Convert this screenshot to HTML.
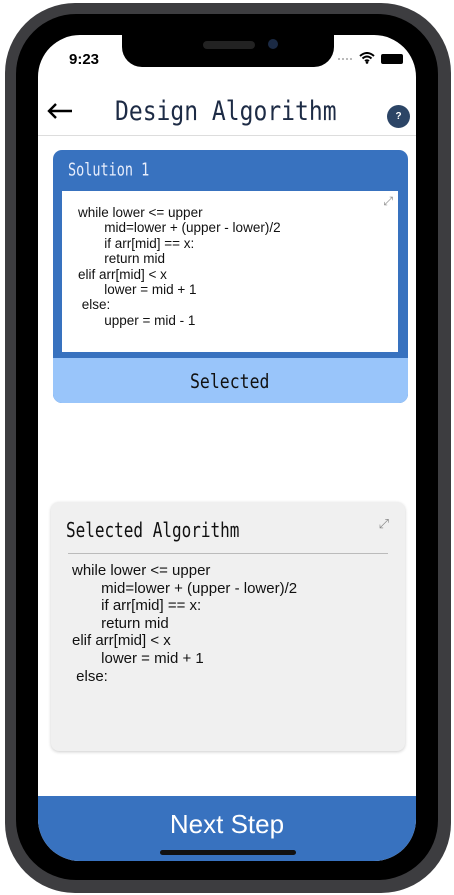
<!DOCTYPE html><html><head><style>
*{margin:0;padding:0;box-sizing:border-box}
body{width:454px;height:895px;background:#fff;position:relative;overflow:hidden;font-family:"Liberation Sans",sans-serif}
.frame{position:absolute;left:5px;top:3px;width:446px;height:890px;border-radius:70px;background:#3d3d40}
.bezel{position:absolute;left:16px;top:14px;width:422px;height:866px;border-radius:60px;background:#000}
.screen{position:absolute;left:38px;top:35px;width:378px;height:826px;border-radius:42px;background:#fff;overflow:hidden}
.notch{position:absolute;left:122px;top:35px;width:212px;height:32px;background:#000;border-radius:0 0 20px 20px}
.mono{font-family:"DejaVu Sans Mono","Liberation Mono",monospace;transform-origin:left top}
.code{font-size:13.5px;line-height:15.4px;color:#111;white-space:pre}
</style></head><body>
<div class="frame"></div><div class="bezel"></div>
<div class="screen">
 <div style="position:absolute;left:31px;top:16px;font-size:15px;font-weight:bold">9:23</div>
 <div style="position:absolute;left:300px;top:23px;width:14px;height:2px;border-top:2px dotted #bbb"></div>
 <svg style="position:absolute;left:321px;top:17px" width="16" height="12" viewBox="0 0 16 12"><path d="M1 4Q8-2 15 4M3.5 6.5Q8 2.5 12.5 6.5M6 9Q8 7.5 10 9" stroke="#000" stroke-width="2" fill="none"/><circle cx="8" cy="10.5" r="1.3"/></svg>
 <div style="position:absolute;left:343px;top:19px;width:22px;height:10px;background:#000;border-radius:2px"></div>
 <svg style="position:absolute;left:8px;top:68px" width="28" height="16"><path d="M26 8H3M10 1L3 8l7 7" stroke="#000" stroke-width="2.4" fill="none"/></svg>
 <div class="mono" style="position:absolute;left:77px;top:62px;font-size:23px;color:#1d2b45;transform:scaleY(1.15)">Design Algorithm</div>
 <div style="position:absolute;left:349px;top:70px;width:23px;height:23px;border-radius:50%;background:#2c4566;color:#fff;font-size:10px;text-align:center;line-height:23px;font-weight:bold">?</div>
 <div style="position:absolute;left:0;top:100px;width:378px;height:1px;background:#ddd"></div>
 <div style="position:absolute;left:15px;top:115px;width:355px;height:253px;border-radius:9px;background:#3872bf;overflow:hidden">
  <div class="mono" style="position:absolute;left:15px;top:10px;color:#e8eefc;font-size:13.5px;transform:scaleY(1.3)">Solution 1</div>
  <div style="position:absolute;left:9px;top:41px;width:336px;height:161px;background:#fff">
   <div style="position:absolute;right:5px;top:3px;font-size:12px;color:#888">⤢</div>
   <div class="code" style="position:absolute;left:16px;top:14px">while lower &lt;= upper
       mid=lower + (upper - lower)/2
       if arr[mid] == x:
       return mid
elif arr[mid] &lt; x
       lower = mid + 1
 else:
       upper = mid - 1</div>
  </div>
  <div style="position:absolute;left:0;top:208px;width:355px;height:45px;background:#99c5fa"></div>
  <div class="mono" style="position:absolute;left:137px;top:220px;font-size:16.5px;color:#111;transform:scaleY(1.2)">Selected</div>
 </div>
 <div style="position:absolute;left:13px;top:467px;width:354px;height:249px;border-radius:8px;background:#f0f0f0;box-shadow:0 1px 3px rgba(0,0,0,.2)">
  <div class="mono" style="position:absolute;left:15px;top:16px;font-size:16px;color:#111;transform:scaleY(1.25)">Selected Algorithm</div>
  <div style="position:absolute;right:16px;top:14px;font-size:13px;color:#888">⤢</div>
  <div style="position:absolute;left:17px;top:51px;width:320px;height:1px;background:#bbb"></div>
  <div class="code" style="position:absolute;left:21px;top:60px;font-size:15px;line-height:17.6px">while lower &lt;= upper
       mid=lower + (upper - lower)/2
       if arr[mid] == x:
       return mid
elif arr[mid] &lt; x
       lower = mid + 1
 else:</div>
 </div>
 <div style="position:absolute;left:0;top:761px;width:378px;height:65px;background:#3872bf;color:#fff;text-align:center;font-size:26px;line-height:56px">Next Step</div>
 <div style="position:absolute;left:122px;top:815px;width:136px;height:5px;border-radius:3px;background:#111"></div>
</div>
<div class="notch"></div>
<div style="position:absolute;left:203px;top:41px;width:52px;height:8px;border-radius:4px;background:#222"></div>
<div style="position:absolute;left:268px;top:39px;width:10px;height:10px;border-radius:50%;background:#1b2a44"></div>
</body></html>
